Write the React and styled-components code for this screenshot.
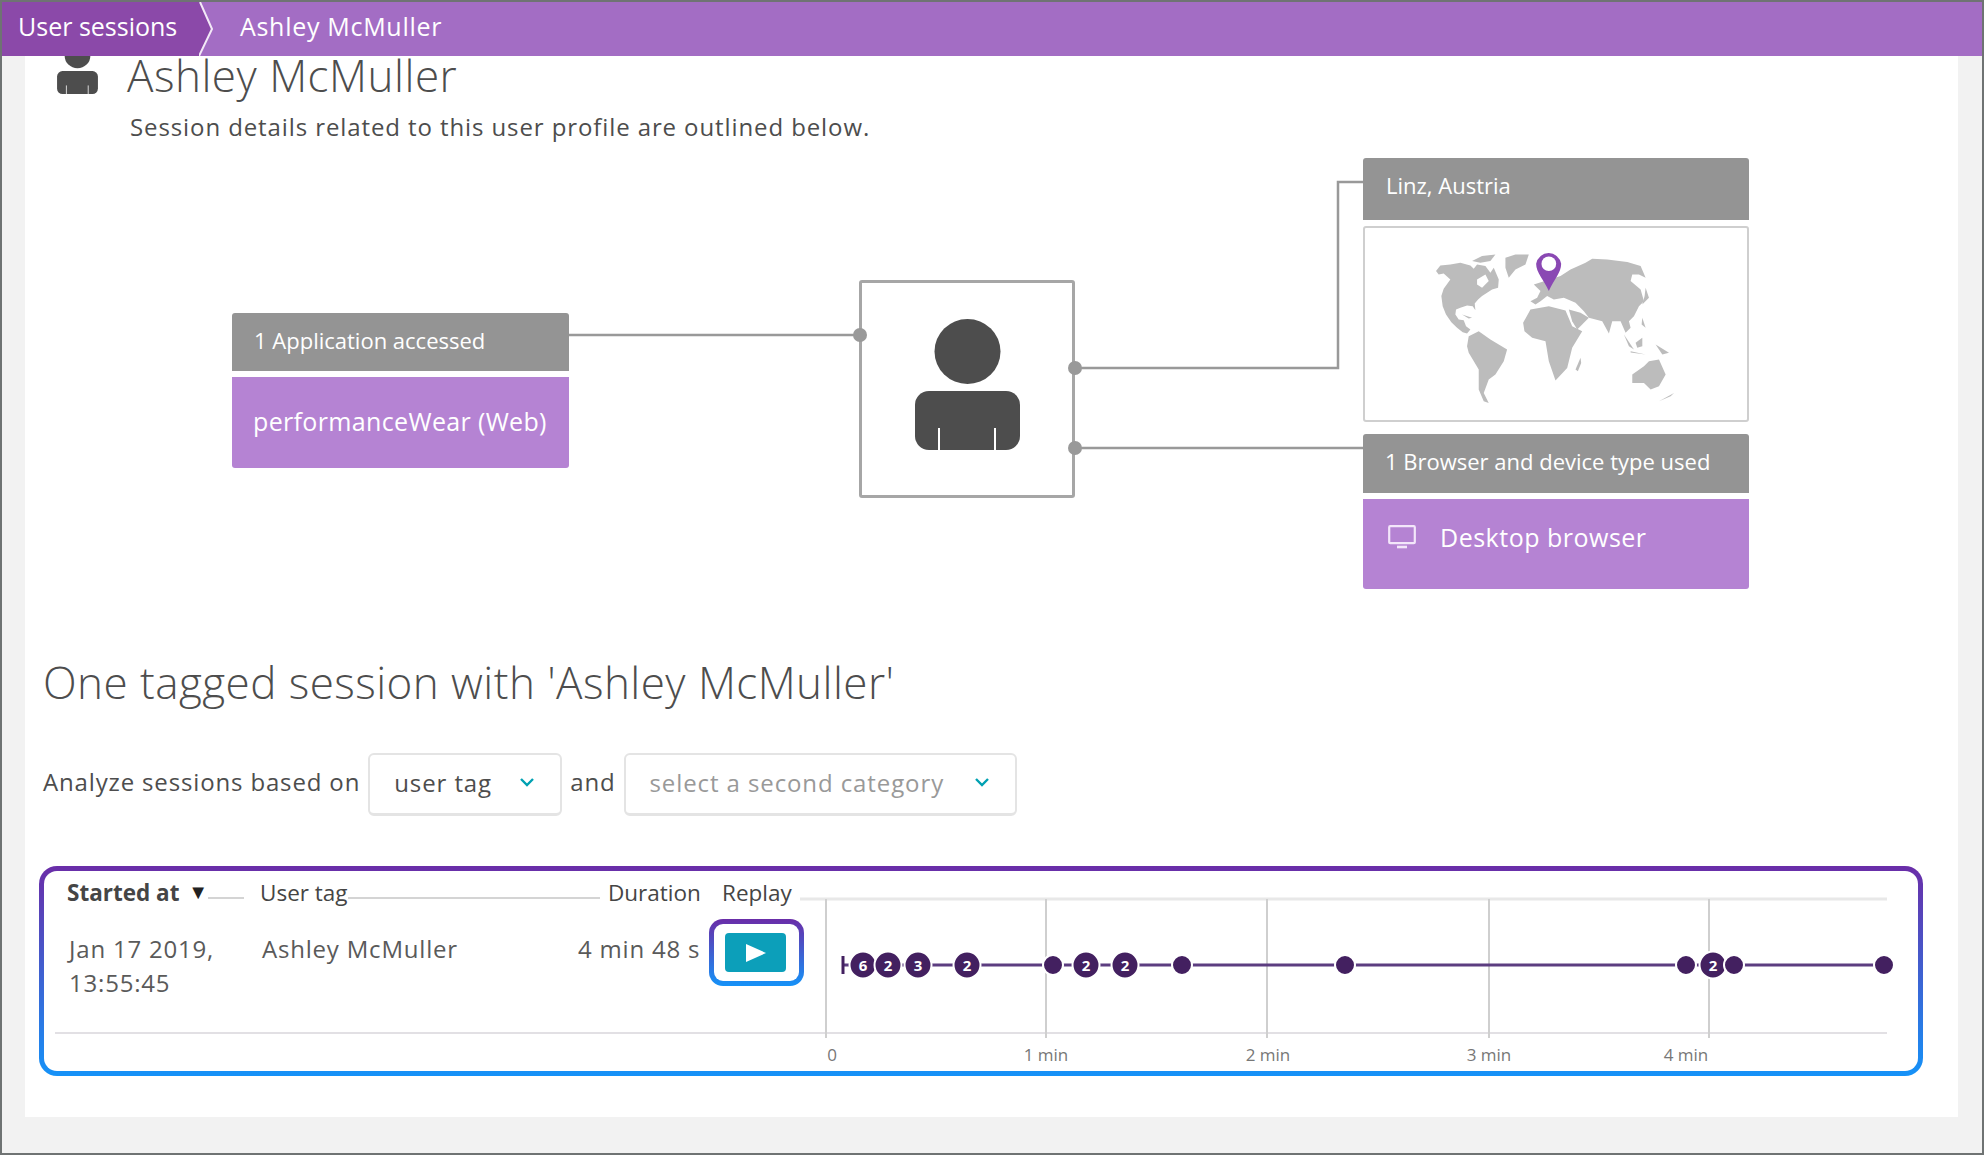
import React from 'react';
import styled, { createGlobalStyle } from "styled-components";

const LAND = [
    "287,390 300,373 330,370 360,365 390,373 400,383 410,370 435,375 450,395 460,380 475,415 473,440 455,445 440,455 425,465 413,475 403,487 405,507 397,495 380,493 360,500 347,505 345,520 355,535 370,537 377,555 390,565 380,577 367,573 350,560 333,543 317,520 307,495 303,465 310,443 330,415 310,397 295,400",
    "365,520 395,530 385,532",
    "495,350 525,340 565,340 555,370 525,385 505,410 495,380",
    "395,360 425,345 465,340 450,360 420,365",
    "385,585 415,570 450,595 500,625 490,660 465,700 445,715 430,755 445,785 430,780 415,745 415,685 385,635 380,615",
    "548,545 570,505 625,495 675,508 695,555 725,570 695,620 680,680 645,718 625,660 615,600 575,590 552,570",
    "705,685 720,650 722,665 712,690",
    "685,505 720,515 745,530 710,565 695,540",
    "570,480 590,470 600,450 580,430 660,405 690,385 735,365 755,353 800,355 860,363 900,375 915,410 895,400 875,400 870,420 900,445 910,480 895,495 880,525 865,540 870,560 855,575 840,540 815,540 805,577 785,540 745,530 730,510 705,485 670,470 640,475 620,465 600,480 585,490",
    "915,440 925,470 905,490 912,465",
    "905,530 915,560 903,550",
    "850,580 880,625 865,615",
    "870,630 915,640 870,634",
    "885,605 905,590 905,615 890,620",
    "945,610 985,635 965,640",
    "875,700 910,675 925,660 955,655 975,700 955,735 930,745 910,725 875,725",
    "955,780 1000,755 990,765",
];

const MARKERS = [
    { x: 63, n: 6 },
    { x: 88, n: 2 },
    { x: 118, n: 3 },
    { x: 167, n: 2 },
    { x: 253 },
    { x: 286, n: 2 },
    { x: 325, n: 2 },
    { x: 382 },
    { x: 545 },
    { x: 886 },
    { x: 913, n: 2 },
    { x: 934 },
    { x: 1084 },
];

const GRID = [26, 246, 467, 689, 909];
const TICKS = [
    { x: 32, label: "0" },
    { x: 246, label: "1 min" },
    { x: 468, label: "2 min" },
    { x: 689, label: "3 min" },
    { x: 886, label: "4 min" },
];

const Person = ({ width, height }) => (
    <svg width={width} height={height} viewBox="0 0 105 131">
        <ellipse cx="52.5" cy="32.5" rx="33" ry="32.5" fill="#4d4d4d" />
        <rect x="0" y="72" width="105" height="59" rx="14" fill="#4d4d4d" />
        <path d="M24 109V131M80 109V131" stroke="#fff" strokeWidth="2" />
    </svg>
);

const Chevron = () => (
    <svg width="16" height="10" viewBox="0 0 16 10">
        <path d="M2 2l6 6 6-6" fill="none" stroke="#00a1b2" strokeWidth="2.4" />
    </svg>
);

const WorldMap = () => (
    <svg width="247" height="157" viewBox="275 330 740 470">
        {LAND.map((points) => (
            <polygon key={points} points={points} fill="#bcbcbc" />
        ))}
        <polygon points="410,415 435,400 445,420 425,440 410,430" fill="#fff" />
        <path d="M625 450C610 415 587 395 587 368A38 38 0 0 1 662 368C662 395 640 415 625 450Z" fill="#8a48b3" />
        <circle cx="625" cy="368" r="22" fill="#fff" />
    </svg>
);

const Timeline = () => (
    <Chart width="1118" height="199" viewBox="0 0 1118 199">
        <line x1="0" x2="1087" y1="27" y2="27" stroke="#e8e8e8" strokeWidth="3" />
        <line x1="0" x2="1087" y1="161" y2="161" stroke="#e2e0e4" strokeWidth="2" />
        {GRID.map((x) => (
            <line key={x} x1={x} x2={x} y1="27" y2="166" stroke="#cfcfcf" strokeWidth="2" />
        ))}
        {TICKS.map((tick) => (
            <TickLabel key={tick.x} x={tick.x} y="182">{tick.label}</TickLabel>
        ))}
        <line x1="43" x2="1084" y1="93" y2="93" stroke="#5c3d80" strokeWidth="3" />
        <line x1="43" x2="43" y1="84" y2="102" stroke="#432060" strokeWidth="3" />
        {MARKERS.map((marker) => (
            <g key={marker.x}>
                <circle cx={marker.x} cy="93" r={marker.n ? 13.5 : 10} fill="#432060" stroke="#fff" strokeWidth="2" />
                {marker.n && <MarkerNumber x={marker.x} y="93">{marker.n}</MarkerNumber>}
            </g>
        ))}
    </Chart>
);

const App = () => {
    return (
        <Page>
            <GlobalStyle />
            <TopBar>
                <RootCrumb>User sessions</RootCrumb>
                <svg width="14" height="54" viewBox="0 0 14 54">
                    <path d="M0 0H1L13 27L0 54Z" fill="#8b49a9" />
                    <path d="M1 0L13 27L0 54" fill="none" stroke="#f3e9f7" strokeWidth="2" />
                </svg>
                <Crumb>Ashley McMuller</Crumb>
            </TopBar>
            <Content>
                <TitleRow>
                    <Person width="41" height="51" />
                    <Title>Ashley McMuller</Title>
                </TitleRow>
                <Subtitle>Session details related to this user profile are outlined below.</Subtitle>
                <Diagram>
                    <Wires width="1400" height="440" viewBox="0 0 1400 440">
                        <path d="M544 177H835M1050 210H1313V24H1338M1050 290H1338" fill="none" stroke="#999" strokeWidth="2.5" />
                        <circle cx="835" cy="177" r="7" fill="#999" />
                        <circle cx="1050" cy="210" r="7" fill="#999" />
                        <circle cx="1050" cy="290" r="7" fill="#999" />
                    </Wires>
                    <LeftColumn>
                        <CardHeader $height={58}>1 Application accessed</CardHeader>
                        <CardBody>performanceWear (Web)</CardBody>
                    </LeftColumn>
                    <UserBox>
                        <Person width="105" height="131" />
                    </UserBox>
                    <RightColumn>
                        <CardHeader $height={62} $inset={23}>Linz, Austria</CardHeader>
                        <MapCard>
                            <WorldMap />
                        </MapCard>
                        <BrowserHeader $height={59}>1 Browser and device type used</BrowserHeader>
                        <BrowserBody>
                            <svg width="28" height="24" viewBox="0 0 28 24" fill="none">
                                <rect x="1.2" y="1.2" width="25.6" height="17" rx="1" stroke="#f3e6fa" strokeWidth="2.2" />
                                <path d="M9 22H19" stroke="#f3e6fa" strokeWidth="2.6" />
                            </svg>
                            Desktop browser
                        </BrowserBody>
                    </RightColumn>
                </Diagram>
                <Heading>One tagged session with 'Ashley McMuller'</Heading>
                <FilterRow>
                    <FilterLabel>Analyze sessions based on</FilterLabel>
                    <Select $width={194}>
                        <span>user tag</span>
                        <Chevron />
                    </Select>
                    <FilterLabel>and</FilterLabel>
                    <Select $width={393} $placeholder>
                        <span>select a second category</span>
                        <Chevron />
                    </Select>
                </FilterRow>
                <Panel>
                    <Table>
                        <HeaderRow>
                            <HeaderCell $bold $gap={16}>
                                Started at <SortArrow>▼</SortArrow>
                                <HeaderLine />
                            </HeaderCell>
                            <HeaderCell $gap={8}>
                                User tag
                                <HeaderLine />
                            </HeaderCell>
                            <HeaderCell>Duration</HeaderCell>
                            <HeaderCell>Replay</HeaderCell>
                        </HeaderRow>
                        <DataRow>
                            <Cell $nudge={2}>Jan 17 2019,<br />13:55:45</Cell>
                            <Cell $nudge={2}>Ashley McMuller</Cell>
                            <Cell>4 min 48 s</Cell>
                            <ReplayBox>
                                <PlayButton>
                                    <svg width="20" height="18" viewBox="0 0 20 18">
                                        <path d="M0 0L20 9L0 18Z" fill="#fff" />
                                    </svg>
                                </PlayButton>
                            </ReplayBox>
                        </DataRow>
                    </Table>
                    <Timeline />
                </Panel>
            </Content>
        </Page>
    );
};

const GlobalStyle = createGlobalStyle`
    * {
        box-sizing : border-box;
    }
    body {
        margin : 0;
        font-family : "Open Sans", sans-serif;
    }
`;

const Page = styled.div`
    width : 1984px;
    height : 1155px;
    border : 2px solid #6f7373;
    background : #f2f2f2;
    overflow : hidden;
`;
const TopBar = styled.div`
    height : 54px;
    display : flex;
    align-items : center;
    background : #a36dc4;
    color : #fff;
    font-size : 25px;
    position : relative;
    z-index : 2;
`;
const RootCrumb = styled.div`
    width : 197px;
    height : 100%;
    padding-left : 16px;
    line-height : 49px;
    background : #8b49a9;
`;
const Crumb = styled.div`
    margin-left : 27px;
    padding-bottom : 6px;
    letter-spacing : 0.7px;
`;
const Content = styled.div`
    width : 1933px;
    height : 1061px;
    margin-left : 23px;
    background : #fff;
`;
const TitleRow = styled.div`
    display : flex;
    align-items : center;
    gap : 29px;
    height : 51px;
    margin-left : 32px;
    transform : translateY(-13px);
`;
const Title = styled.h1`
    margin : 0;
    font-size : 44px;
    line-height : 36px;
    font-weight : 300;
    letter-spacing : 0.5px;
    color : #4d4d4d;
    position : relative;
    top : 6px;
`;
const Subtitle = styled.p`
    margin : 4px 0 0 105px;
    font-size : 24px;
    line-height : 32px;
    letter-spacing : 0.9px;
    color : #4d4d4d;
`;
const Diagram = styled.div`
    position : relative;
    display : flex;
    align-items : flex-start;
    margin-top : 15px;
    padding-left : 207px;
    height : 431px;
`;
const Wires = styled.svg`
    position : absolute;
    left : 0;
    top : 0;
    z-index : 1;
`;
const LeftColumn = styled.div`
    display : flex;
    flex-direction : column;
    gap : 6px;
    width : 337px;
    margin-top : 155px;
`;
const CardHeader = styled.div`
    height : ${(props) => props.$height}px;
    padding-left : ${(props) => props.$inset || 22}px;
    border-radius : 3px 3px 0 0;
    background : #949494;
    color : #fff;
    font-size : 22px;
    line-height : 54px;
`;
const BrowserHeader = styled(CardHeader)`
    margin-top : 12px;
`;
const CardBody = styled.div`
    display : flex;
    align-items : center;
    height : 91px;
    padding : 0 0 4px 21px;
    border-radius : 0 0 3px 3px;
    background : #b583d3;
    color : #fff;
    font-size : 25px;
    letter-spacing : 0.35px;
`;
const BrowserBody = styled(CardBody)`
    gap : 24px;
    height : 90px;
    margin-top : 6px;
    padding : 0 0 14px 25px;
    letter-spacing : 0.5px;
`;
const UserBox = styled.div`
    display : flex;
    align-items : center;
    justify-content : center;
    width : 216px;
    height : 218px;
    margin : 122px 0 0 290px;
    padding-bottom : 9px;
    border : 3px solid #a6a6a6;
    border-radius : 3px;
    background : #fff;
`;
const RightColumn = styled.div`
    display : flex;
    flex-direction : column;
    width : 386px;
    margin-left : 288px;
`;
const MapCard = styled.div`
    display : flex;
    align-items : center;
    justify-content : center;
    height : 196px;
    margin-top : 6px;
    padding : 10px 2px 0 0;
    border : 2px solid #cfcfcf;
    border-radius : 3px;
`;
const Heading = styled.h2`
    margin : 62px 0 0 18px;
    font-size : 44px;
    line-height : 62px;
    font-weight : 300;
    letter-spacing : 0.45px;
    color : #4d4d4d;
`;
const FilterRow = styled.div`
    display : flex;
    align-items : center;
    gap : 8px;
    margin : 40px 0 0 18px;
`;
const FilterLabel = styled.span`
    padding-bottom : 6px;
    font-size : 24px;
    letter-spacing : 0.85px;
    color : #4d4d4d;
`;
const Select = styled.div`
    display : flex;
    align-items : center;
    justify-content : space-between;
    width : ${(props) => props.$width}px;
    height : 63px;
    padding : 0 25px 4px 24px;
    border : 2px solid #e4e4e4;
    border-bottom-width : 3px;
    border-radius : 6px;
    font-size : 24px;
    letter-spacing : 0.9px;
    color : ${(props) => (props.$placeholder ? "#999" : "#4d4d4d")};
`;
const Panel = styled.div`
    display : flex;
    width : 1884px;
    height : 210px;
    margin : 50px 0 0 14px;
    border : 5px solid transparent;
    border-radius : 18px;
    background : linear-gradient(#fff, #fff) padding-box, linear-gradient(#6a2da8, #1592f8) border-box;
`;
const Table = styled.div`
    width : 756px;
    height : 163px;
    margin : 0 -11px 0 11px;
    padding-left : 12px;
    border-bottom : 2px solid #e2e0e4;
    flex-shrink : 0;
`;
const HeaderRow = styled.div`
    display : grid;
    grid-template-columns : 193px 348px 114px 1fr;
    height : 34px;
    margin-top : 4px;
`;
const HeaderCell = styled.div`
    display : flex;
    align-items : center;
    padding-right : ${(props) => props.$gap || 0}px;
    font-size : 22.5px;
    font-weight : ${(props) => (props.$bold ? 700 : 400)};
    color : #454545;
    white-space : pre;
`;
const SortArrow = styled.span`
    margin-left : 3px;
    font-size : 20px;
    line-height : 1;
    color : #222;
`;
const HeaderLine = styled.span`
    flex : 1;
    height : 2px;
    margin-top : 12px;
    background : #d4d4d4;
`;
const DataRow = styled.div`
    display : grid;
    grid-template-columns : 193px 318px 122px 1fr;
    padding-top : 23px;
`;
const Cell = styled.div`
    padding-left : ${(props) => props.$nudge || 0}px;
    font-size : 24px;
    line-height : 34px;
    letter-spacing : 0.8px;
    color : #5a5a5a;
    white-space : nowrap;
`;
const ReplayBox = styled.div`
    display : flex;
    align-items : center;
    justify-content : center;
    width : 95px;
    height : 67px;
    margin : -13px 0 0 9px;
    padding-right : 2px;
    border : 5px solid transparent;
    border-radius : 14px;
    background : linear-gradient(#fff, #fff) padding-box, linear-gradient(#6a2da8, #1592f8) border-box;
`;
const PlayButton = styled.div`
    display : flex;
    align-items : center;
    justify-content : center;
    width : 61px;
    height : 39px;
    border-radius : 4px;
    background : #0c9fba;
`;
const Chart = styled.svg`
    flex-shrink : 0;
    margin-top : 1px;
`;
const TickLabel = styled.text`
    font-size : 17px;
    fill : #777;
    text-anchor : middle;
    dominant-baseline : central;
`;
const MarkerNumber = styled.text`
    font-size : 15px;
    font-weight : 700;
    fill : #fff;
    text-anchor : middle;
    dominant-baseline : central;
`;

export default App
